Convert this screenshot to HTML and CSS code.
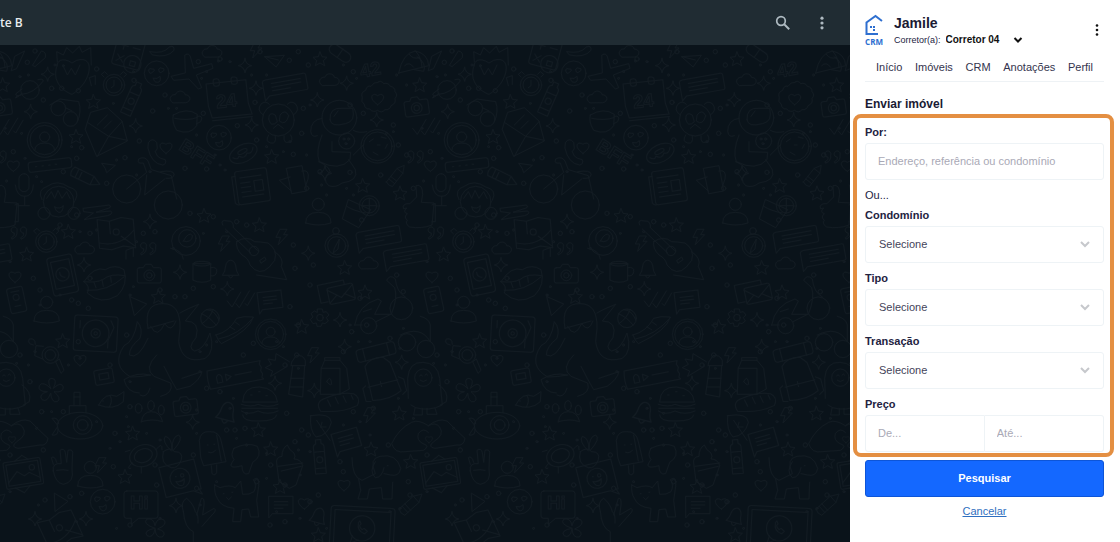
FILE: index.html
```html
<!DOCTYPE html>
<html lang="pt-BR">
<head>
<meta charset="utf-8">
<meta name="viewport" content="width=device-width, initial-scale=1">
<title>CRM</title>
<link rel="stylesheet" href="styles.css">
</head>
<body>
<div class="app">
  <main class="chat">
    <header class="chat-header">
      <span class="chat-title">te B</span>
      <div class="chat-actions">
        <button class="icon-button" type="button" aria-label="Buscar">
          <svg width="18" height="18" viewBox="0 0 18 18" fill="none" stroke="currentColor"><circle cx="7" cy="7" r="4.3" stroke-width="1.7"/><path d="M10.2 10.2L15.2 15.2" stroke-width="2"/></svg>
        </button>
        <button class="icon-button" type="button" aria-label="Menu">
          <svg width="18" height="18" viewBox="0 0 18 18" fill="currentColor"><circle cx="9" cy="4.2" r="1.6"/><circle cx="9" cy="9" r="1.6"/><circle cx="9" cy="13.8" r="1.6"/></svg>
        </button>
      </div>
    </header>
    <div class="chat-body">
      <svg class="wallpaper" width="100%" height="100%" aria-hidden="true">
        <defs>
          <marker id="ring" markerWidth="18" markerHeight="18" refX="9" refY="9" markerUnits="userSpaceOnUse"><circle cx="9" cy="9" r="6.5" class="ink"/></marker>
          <marker id="dot" markerWidth="10" markerHeight="10" refX="5" refY="5" markerUnits="userSpaceOnUse"><circle cx="5" cy="5" r="3" class="ink"/></marker>
          <path id="star" d="M0-21L6-7L21-5L10 5L14 20L0 12L-14 20L-10 5L-21-5L-6-7Z"/>
          <path id="spark" d="M0-21Q2-3 20 0Q3 3 0 21Q-3 3-20 0Q-3-3 0-21Z"/>
          <path id="heart" d="M0 17C-30-2-17-22 0-10C17-22 30-2 0 17Z"/>
          <path id="cloud" d="M-22 16C-38 6-26-10-14-8C-8-24 14-20 15-8C34-8 34 14 18 16Z"/>
          <g id="smile"><circle r="37"/><path d="M-24-10q2-8 10-3q8-2 7 5q-9 9-13 8q-4-4-4-10M6-12q4-8 10-3q8-1 6 6q-8 8-12 7q-4-4-4-10M-10 15q12 4 20-6q4 18-8 18q-10 0-12-12"/></g>
          <g id="avatar"><circle r="52"/><circle r="44"/><circle cy="-9" r="15"/><path d="M-30 31q2-22 30-22t30 22"/></g>
          <g id="bubble"><path d="M-60-24H56q6 0 6 6V20q0 6-6 6H-56l-14 12V-18q2-6 10-6Z"/><path d="M-44-10H44M-44 1H44M-44 12H10"/></g>
          <g id="camera"><path d="M-30-22h12l6-10h18l6 10h18q6 0 6 6v34q0 6-6 6h-60q-6 0-6-6v-34q0-6 6-6Z"/><circle r="16" cy="1"/><circle r="8" cy="1"/></g>
          <g id="phone"><rect x="-38" y="-58" width="76" height="116" rx="10"/><rect x="-28" y="-44" width="56" height="82"/><circle r="20" cy="-2"/><path d="M-7-10q-2 14 12 18"/></g>
          <g id="person"><circle cy="-28" r="18"/><path d="M-38 28q0-32 38-32t38 32Q0 40-38 28Z"/></g>
          <g id="bell"><path d="M-24 18q8-10 9-28q4-16 15-16t15 16q1 18 9 28ZM-7 20q7 14 14 0"/></g>
          <g id="pencil"><path d="M-44-14H20L46 0L20 14H-44Q-52 0-44-14ZM-30-14V14M20-14V14M-18-14V14"/></g>
          <g id="map"><path d="M-54-46l36 8 36-8 36 8V48l-36-8-36 8-36-8ZM-54 24q60 20 108-30M14 10l40 34M-18-38V0"/><circle r="9" cy="-4"/></g>
          <g id="mug"><path d="M-28-24H24V26Q-2 38-28 26ZM24-12q20-4 18 12t-18 12"/><ellipse cy="-24" cx="-2" rx="26" ry="7"/></g>
          <g id="note"><path d="M-36-26H36V26H-26l-10 12Z"/><path d="M-20-10H20M-20 0H20M-20 10H6"/></g>
          <g id="timer"><circle r="32"/><circle r="24"/><path d="M0-14V2L-8 8M-30-24l-8-8 10-8 8 8M30-24l8-8-10-8-8 8"/></g>
          <g id="bottle"><path d="M-16-34q0-8 8-10v-12H8v12q8 2 8 10V46h-32ZM-16-20H16M-16 30H16"/><circle cy="4" r="9"/></g>
          <path id="bolt" d="M-4-22H16L6-6H18L-10 24L-4 2H-16Z"/>
          <path id="ticks" d="M-40 0l14 18 26-44M-14 8l10 12 30-50M14 8l6 6 22-38"/>
          <g id="quote"><path d="M-20 10q12-6 8-14a9 9 0 1 1 8-6q2 18-14 24ZM8 10q12-6 8-14a9 9 0 1 1 8-6q2 18-14 24Z"/></g>
          <g id="doodles">
            <polyline class="marks rings" points="105,18 82,52 290,72 155,130 130,165 235,137 185,130 402,106 595,50 660,42 610,205 495,150 458,198 418,288 555,370 375,338 40,320 230,340 245,308 190,380 320,415 620,372 712,242 765,172 868,46 780,20 895,20 770,285 880,328 905,265 910,190 925,60 1060,80 1050,180 1090,205 1195,300 1180,240 1050,382 1142,390 920,430 1085,525 960,380 1240,430 1220,330 570,505 640,515 710,530 430,565 465,560 270,565 230,510 180,540 100,700 120,735 270,700 215,765 265,790 235,775 480,735 525,755 555,755 580,730 640,725 740,540 880,600 885,670 870,785 895,840 890,930 855,960 730,930 760,895 380,870 60,930 235,890 330,960 90,1010 125,1100 190,1100 345,1165 390,1085 620,1030 660,1040 680,1155 705,1155 735,1150 860,1105 885,1190 905,1155 812,1260 855,1320 770,1310 580,1230 465,1260 470,1320 340,1265 245,1345 210,1355 135,1365 130,1215 30,1230 390,1440 590,1330 810,1440 855,1430 930,1370 955,1350 1020,1250 1030,1280 1225,1310 1230,1350 1165,1200 1120,1090 1060,1100 1055,860 1100,840 1170,880 1030,920 930,720 940,660 1210,740 1190,690 1080,760 925,1170"/>
            <polyline class="marks dots" points="60,95 85,90 165,60 190,62 340,175 400,80 620,80 655,48 690,50 755,90 800,90 605,100 505,190 530,190 590,270 645,330 660,360 675,375 800,305 850,320 930,180 1030,60 1190,90 1220,120 1070,100 920,330 870,290 410,390 350,345 450,380 215,305 65,265 75,340 20,408 110,395 125,410 15,250 1180,260 1160,265 1040,430 980,450 965,420 1060,450 680,560 610,565 520,610 410,590 290,555 175,550 240,560 30,650 120,780 180,750 400,725 390,750 650,890 600,920 620,900 850,905 830,890 895,970 1050,840 1075,890 1110,890 1210,850 1200,910 85,960 105,920 50,955 205,960 240,940 390,1010 600,980 690,1090 700,1060 740,1105 590,1095 380,1115 385,1145 290,1130 155,1100 110,1150 330,1210 360,1190 440,1165 480,1185 590,1165 710,1180 740,1200 800,1225 895,1215 930,1220 900,1290 800,1300 650,1310 600,1380 480,1420 350,1450 230,1430 115,1380 30,1340 830,1400 900,1420 980,1450 1200,1390 1170,1400 1030,1140 1080,1130 1110,1170 1240,1120 1195,1060"/>
            <g class="ink">
              <path d="M172 50L170 20L190 30L200 8L218 24L238 4L246 22L272 8L274 60M172 60c-20 50 20 80 44 88c60-36 72-120 14-102l-14 8c-30-20-46-4-44 6"/><path d="M190 64l12 26 12-20 12 20 14-30"/>
              <g transform="translate(385 25) rotate(15)"><rect x="-42" y="-46" width="84" height="88" rx="8"/><path d="M-30-20h24M-18-32v24M10-20h22M-30 10l20 20M-10 10l-20 20"/><circle cx="20" cy="28" r="26"/><rect x="12" y="20" width="16" height="14"/></g>
              <use href="#smile" x="470" y="85"/><use href="#smile" x="657" y="278"/><use href="#smile" x="308" y="1370"/>
              <path d="M555 30q14-10 18 12l8 28 54-14 4 14-50 20 16 38-10 4-28-30-46 4-8-12 42-10Z"/>
              <path d="M450 20q40 8 58-14 16-6 14 10-20 24-64 14Z"/>
              <g transform="translate(685 160) rotate(-6)"><path d="M-62-50H58V20L66 54H-54L-62 16ZM-54 62H66"/><rect x="-40" y="-62" width="18" height="22" rx="7"/><rect x="14" y="-62" width="18" height="22" rx="7"/><text class="doodle-text" x="-38" y="26">24</text></g>
              <circle cx="90" cy="135" r="28"/><path d="M66 146q-30 22-16 8M64 150q-20 6-16-4l18-14M66 148Q100 146 130 108q0-8-16-4"/>
              <use href="#timer" x="342" y="120"/><use href="#timer" x="139" y="590"/>
              <use href="#bottle" transform="translate(395 165) rotate(24)"/><use href="#bottle" transform="translate(959 1240) rotate(-5)"/>
              <circle cx="175" cy="190" r="22"/><circle cx="212" cy="222" r="22"/><path d="M150 180l30-18 56 8q10 30-4 60M196 188l20 10"/>
              <circle cx="-30" cy="892" r="26"/><circle cx="27" cy="912" r="26"/><path d="M-50 870q60-30 90 20V840q-4-20-30-26"/>
              <path d="M262 232l10-30 50-14 44 40 16 60-92 46-34-80Zm0 0l64 42 40-44M292 334l34-60 56 12M292 240l30-30M312 250l22-22"/>
              <use href="#avatar" x="134" y="285"/><use href="#avatar" transform="translate(812 868) scale(.88)"/>
              <g transform="translate(150 360) rotate(-7)"><rect x="-65" y="-15" width="130" height="30" rx="8"/><path d="M-44 0h4M-24 0h4M-4 0h4M16 0h4"/></g>
              <use href="#pencil" transform="translate(258 398) rotate(26)"/><use href="#pencil" transform="translate(1190 390) rotate(-52) scale(.8)"/><use href="#pencil" transform="translate(1235 1375) rotate(-42) scale(.9)"/>
              <rect x="57" y="386" width="30" height="54" rx="15"/><path d="M46 420q4 34 28 34t26-34M74 454v26M54 482h34"/>
              <circle cx="176" cy="470" r="46"/><circle cx="132" cy="505" r="18"/><circle cx="222" cy="505" r="18"/><path d="M126 464q-16-30 16-40 30-22 64 2 36 8 20 40M140 460l14-20 10 20 10-24 12 24 14-20 10 20M164 486q16 8 26-4-2 22-14 20-10-4-12-16"/>
              <circle cx="380" cy="432" r="42"/><circle cx="505" cy="480" r="42"/><path d="M380 432l60-50-10-28q-20 4-14-12 18-10 28 6l10 26 60 18 16 70M440 390l-6 60 60-48M482 380q40-6 40 8t-24 12"/>
              <path d="M446 292q10-16 24 0l2 18-6 10q4 16 16 20l14 4q4 14-8 16-34-4-44-50Z"/>
              <path d="M520 210q40-24 72-2l-2 34q-20 30-60 14Q514 230 520 210ZM592 214q20-4 10 16l-12 6M524 220q40 8 66-2"/>
              <g transform="translate(730 325) rotate(-26)"><ellipse rx="44" ry="26"/><ellipse cy="-6" rx="15" ry="6"/><path d="M-34-2q10 14 18 4 14 16 26 2 14 10 24-8"/></g>
              <text class="doodle-text" transform="translate(534 312) rotate(32)">BFF</text>
              <g transform="translate(755 420) rotate(-8)"><rect x="-46" y="-46" width="96" height="100" rx="7"/><path d="M-46-32h-10v78q2 8 12 8M-32-26h64M-32-10h28M-32 4h28M-32 18h28M-32 32h64"/><rect x="8" y="-12" width="26" height="32"/></g>
              <circle cx="835" cy="225" r="48"/><path d="M790 210q-22-14-6-34 14-10 24 2M880 210q22-14 6-34-14-10-24 2M806 222q0-24 20-12l6 20q-20 20-26-8M866 212q-10-22-26-2l-2 18q20 16 28-16M820 250l14-12 16 12M806 270q-12 20 6 24t14-20M852 274q-2 22 14 18t6-22"/>
              <use href="#bubble" transform="translate(859 118) rotate(-10)"/><use href="#bubble" transform="translate(1140 575) rotate(-10)"/><use href="#bubble" transform="translate(1222 630) rotate(-10)"/>
              <path d="M860 370l46-8 14 76-44 8ZM870 396l-32 10 36 32M906 378q24-6 18 24l-8 24"/>
              <path d="M795 35l58-4-24 34ZM795 35l40 10M0 35q30 20 20 44l-28-5M34 76l10-42 30-16-24 52ZM98 60l26-42q16 2 12 20l-30 26Z"/>
              <g transform="translate(1020 25) rotate(35)"><rect x="-36" y="-15" width="72" height="30" rx="15"/><path d="M0-15v30"/></g>
              <text class="doodle-text" transform="translate(1084 98) rotate(-10)">42</text>
              <path d="M1196 84q12-60 50-66 38 8 40 44l-90 22ZM1214 62q14-14 26 4M1246 18q20 20 20 50M1228 28q10 16 30 10"/>
              <path d="M1133 112q10-8 18 4 14-4 20 8 14 2 14 16 10 10 0 20 4 16-12 22-4 14-18 12-10 12-22 2-14 8-24-4-16 0-16-14-12-8-6-20-6-16 10-22 4-16 16-12 8-14 20-12Z"/><use href="#heart" x="1133" y="162"/>
              <use href="#camera" transform="translate(1250 188) rotate(-8)"/><use href="#camera" x="448" y="690"/><use href="#camera" transform="translate(557 1087) rotate(-7)"/>
              <circle cx="1018" cy="218" r="52"/><path d="M990 224q-2-38 36-34h32q10 40-22 46-44 12-46-12M1002 214l12-16M966 270q-20 50-8 80 60 30 92-6l2-22-56-2v-30M966 220q-34 4-34 40 4 20 20 12M956 350q30 12 34 30-26 22-4 42 20 8 40-8 50-6 40-40-12-20-20-30M1060 256q16 10 40 4M1060 330l30-30"/><circle cx="1040" cy="288" r="24"/><circle cx="1032" cy="282" r="3"/><circle cx="1046" cy="282" r="3"/><circle cx="1038" cy="296" r="3"/>
              <circle cx="1133" cy="304" r="50"/><circle cx="1133" cy="304" r="43"/><path d="M1108 290l12-8M1144 276l14 4M1120 322l14 8M1156 310l6-12M1132 300h8"/>
              <use href="#ticks" x="1278" y="250"/><use href="#ticks" x="722" y="768"/>
              <path d="M1210 490q-4-16 20-14l20-20-2-34q20-6 20 26l-4 24 38 2-6 66q-30 12-68 6-14-12-6-20-12-10 0-20-16-6-2-16ZM1296 480l10-4v54h-10"/>
              <path d="M1046 464l66 30-36 54-48-26ZM1040 484q22 14 56 20"/><circle cx="1108" cy="482" r="30"/><circle cx="1108" cy="482" r="22"/><path d="M1108 460v44M1086 482h44"/>
              <use href="#person" x="955" y="506"/><use href="#person" x="140" y="800"/><use href="#person" x="271" y="1295"/>
              <circle cx="1010" cy="602" r="35"/><circle cx="1010" cy="602" r="27"/><circle cx="1008" cy="558" r="10"/><path d="M1004 608l14-26-4 30-14 12Z"/>
              <use href="#map" transform="translate(349 565) rotate(-5)"/><use href="#map" transform="translate(180 1452) rotate(-25)"/>
              <use href="#phone" transform="translate(188 690) rotate(-12)"/>
              <path d="M252 710q30-48 64-36 28-18 56 0 14 44-20 78-50 30-90-8 10-20-10-34ZM252 710q36 4 56-6 24-20 66-12M262 736q60 4 110-40M282 712l6 16M306 704l4 20M332 696l2 16"/>
              <circle cx="558" cy="588" r="43"/><circle cx="562" cy="580" r="26"/><path d="M550 588q16-30 28-16-4 24-28 16M512 610q34 4 38 32"/>
              <path d="M668 540q-8-18 14-12 20-2 18 20l72 68M676 552l76 72M710 590q30-20 54 0 14 0 40 4 30 20 20 52l-16 20q-30 30-58-6-4-20-24-30-20-20-16-40ZM780 646l14-10 4 8-14 10ZM824 620q30 20 20 44l16 40-90-14"/><circle cx="762" cy="618" r="14"/>
              <use href="#mug" x="608" y="680"/><use href="#bell" x="692" y="672"/><use href="#bell" transform="translate(680 1103) rotate(15) scale(1.2)"/><use href="#bell" transform="translate(955 1415) rotate(15)"/>
              <g transform="translate(287 865) rotate(3)"><rect x="-65" y="-52" width="130" height="106" rx="8"/><circle r="40"/><circle r="14"/><circle r="5"/><path d="M44-40l10 20-16 40v22M-48-36v22"/></g>
              <path d="M444 850q-14-76 46-74 52 0 50 74l-4 40q10 70 80 50 30-20 14-76-18 50-46 54-24-8 4-40 14-50-32-50l40-50q-40 16-56 26M444 850l78-22M452 844q20 40 42-8 20 30 34-8M444 880q-30 66-56 50 0-24 32-50 10-30-8-50-10 60-40 72-40 60 20 94 30 0 60-6M470 930q-40 40-8 64l50 20q10 30-30 40M492 964q20 40 38 70l40-10q30-20 36-44l-60 20M450 990q-40-10-78 14 10 40 46 40M420 1050q20 12 30-20"/>
              <circle cx="630" cy="820" r="28"/><path d="M604 806q26 10 44 34M640 794q-14 30-34 42M620 794q24 0 36 30"/>
              <path d="M648 870q40-10 62-50 20-8 50-4-10 40-96 80-10-8-16-26ZM656 882q60-12 104-64M690 846l14 8M704 830l14 10"/>
              <use href="#note" transform="translate(810 765) rotate(-7)"/><use href="#note" transform="translate(1039 1185) rotate(-16) scale(1.1)"/><use href="#note" x="843" y="1380"/>
              <circle cx="151" cy="930" r="25"/><circle cx="151" cy="930" r="16"/><path d="M168 950l10-8 14 34-8 8ZM128 942l-24-10 4-30 22 2M100 900q-20-4-12-18 18-4 18 16"/>
              <g transform="translate(50 765) rotate(-12)"><rect x="-24" y="-38" width="48" height="76" rx="7"/><circle cy="-8" r="9"/><path d="M-9 18H9M-12-26h24"/></g>
              <g transform="translate(705 990) rotate(-11)"><path d="M-80-28H82l-4 10 4 10-4 10 4 10-4 10 4 6H-80q-6-26 0-56Z"/><path d="M-56-4q8-14 16 0v18h-16ZM-28-8l16 10-16 10ZM0 0h50"/></g>
              <path d="M728 1070q2-46 50-44 50 4 54 44ZM724 1078q30 10 50 0 30 12 60 0M726 1090h106M724 1098q20 14 50 0 30 14 60 0M728 1110q0 20 50 18 50 0 52-18M752 1050h4M776 1040h4M798 1052h4"/>
              <path d="M152 1030q-14-30 4-30 18 2 4 30 24-22 30-4 0 18-28 14 24 20 10 30-18 4-20-26-10 30-26 20-12-16 16-24-30 0-24-18 10-16 34 8Z"/>
              <ellipse cx="240" cy="1142" rx="68" ry="40"/><circle cx="248" cy="1140" r="28"/><circle cx="248" cy="1140" r="16"/><path d="M208 1106v-24h50v20M222 1082v-40h18v40M222 1056h18M172 1140l-16-20q20-4 20 16M172 1146l-16 24q20 4 18-18"/>
              <path d="M296 1080q20-40 54-26l22-14-2 30q-30 28-74 10ZM330 1052q10 14-2 34M308 1068h2"/>
              <path d="M424 1130q4-30 30-30t34 30q-30-10-64 0Z"/><ellipse cx="416" cy="1090" rx="10" ry="14"/><ellipse cx="453" cy="1082" rx="10" ry="15"/><ellipse cx="484" cy="1095" rx="9" ry="14"/>
              <g transform="translate(312 995) rotate(-10)"><rect x="-28" y="-22" width="56" height="44" rx="5"/><rect x="-14" y="-10" width="28" height="18"/></g>
              <path d="M602 1236l-4-50q4-28 30-26 30-2 36 30l14 60-66 12ZM650 1170l14 78M634 1262l2 24q10 8 14-4v-22M622 1200h2M642 1198h2M626 1222q14 4 20-6"/>
              <path d="M490 1220q20-16 34 0 26 0 20 24-10 28-30 24-34-10-24-48ZM514 1218q-30-30-18-44 20 4 20 40 0-40 20-44 16 10-16 46"/>
              <ellipse cx="430" cy="1232" rx="42" ry="32" transform="rotate(-20 430 1232)"/><ellipse cx="430" cy="1232" rx="28" ry="20" transform="rotate(-20 430 1232)"/><path d="M468 1214q20-26 18 0M396 1254q-20 20-4 16M390 1216l-14 4M424 1266v18"/>
              <path d="M702 1210q40-20 70-6 16 30-14 48l-12 34q-20 6-20-24-50 14-24-18-12-14 0-34Z"/>
              <g transform="translate(70 1285) rotate(-9)"><rect x="-56" y="-40" width="112" height="80" rx="5"/><rect x="-48" y="-32" width="96" height="64"/><path d="M-48 22l30-30 20 16 16-8 30 20M-20-40l24-14 16 14M-30 40l24 18 20-18"/><circle cx="28" cy="-14" r="8"/></g>
              <path d="M160 1278q-4-26 24-22l-4-40q12-8 16 6l4 30 4-36q12-4 14 6l-2 50q8 40-26 46-24-4-30-40ZM160 1258l-6-20q10-8 16 14M170 1276q20-4 34 0"/>
              <g transform="translate(540 1300) rotate(-14)"><path d="M-54-46H54V46H48l6 16-24-16H-54Z"/><circle r="30"/><path d="M-12-8h2M8-12a5 5 0 1 0 1 0M-14 6q14 8 26-2-4 22-14 18-8-2-12-16"/></g>
              <path d="M380 1338h86q8 0 8 8v66q0 8-8 8h-50l-22 18v-18h-14q-8 0-8-8v-66q0-8 8-8Z"/><text class="doodle-text" x="390" y="1392">Hi</text>
              <path d="M644 1320l16 8q30-10 46 0l16-20 6 40q20 2 34-8 10-20-2-36 20-14 16 20l-6 42 6 50h-24l-6-24-20 2-4 36h-24l4-40q-40-4-50-30-10-16-8-40ZM670 1346h2M696 1342h2M680 1358l6 6 8-8"/>
              <path d="M465 1450q-40-14-24-28 20-4 24 20 6-26 26-18 14 14-18 28 30 8 14 24-20 4-22-24-6 30-24 20-12-16 24-22"/>
              <path d="M550 1400q-10-30 10-40 20 16 26 40 10 8 8 34M590 1410l14-50q10-2 8 20l-4 30 34-20q10 6-6 20l-30 34M550 1400q4 50 30 60v40"/>
              <path d="M964 970l10-24h46l20 24 8 62-30 16h-56ZM964 970h56v78M974 946v-8h46v8M980 1010q10-20 14 0t-14 0"/>
              <g transform="translate(1139 985) rotate(-14)"><path d="M-38-30q20-24 60-14l16 20 12 90q-40 20-90 8ZM-50 26l-10 6v40l14 4M52 24l14 10v36l-14 8M-44 32h92M-4 24v16"/><rect x="-54" y="-84" width="118" height="38" rx="10"/><path d="M-32-84v38M42-84v38"/></g>
              <g transform="translate(1014 1070) rotate(-9)"><path d="M-56 20q-14-30 20-36 50-12 86 0 20 14 6 36-50 16-112 0M-30-10l6 20M-6-14l6 20M18-14l6 20M42-14l4 14"/></g>
              <g transform="translate(1011 750) rotate(-12)"><rect x="-26" y="-26" width="78" height="50" rx="6"/><path d="M-26-20l38 30 38-30M-26 20l26-20M52 20L22 0M-30 14h-22v-54h80v12"/></g>
              <path d="M953 792h14l2 10 10-2 8 10-8 8 6 10-10 8-8-2-4 10h-12l-2-10-10 2-8-12 8-8-6-10 10-8 8 4Z"/><circle cx="960" cy="818" r="10"/>
              <circle cx="1106" cy="842" r="24"/><circle cx="1204" cy="790" r="34"/><path d="M1064 840q10-60 70-78l10 6-20 40h50q20-50 10-80l-24-22q10-20 26-4 4 40 30 54M1064 840h22M1128 830l44-22M1090 800l24-8"/>
              <path d="M876 950l12-18q20-4 28 14v16h-42ZM878 962l-12 86 42 8 6-94M872 1000h40M870 1026h40M868 950l-40-24-2 20-22-4 10 16-18 10 22 10-6 16 50-30"/>
              <path d="M830 1256q-4-20 16-22 0-24 16-34 4 14 20 24 6 10 0 18 20 0 26 20l-20 58-20 10-30-20ZM834 1264l74-10M844 1278l60-14"/>
              <path d="M932 1112q60-10 62 20-10 40-46 44-20-20-16-64ZM950 1126l40 60M962 1146h16M962 1146l4-14"/>
              <path d="M1056 1238q0 60 30 68l40-20q-20-46 14-52 50-10 62 36-4 26-30 20l-20-4M1076 1302l6 34-8 26h28l6-30 36-4 4 34h28l2-50M1126 1250q-20 30 0 48 20 0 26-30M1162 1262h2"/>
              <g transform="translate(1087 1440) rotate(3)"><rect x="-96" y="-54" width="192" height="130" rx="10"/><rect x="-84" y="-42" width="168" height="118"/><circle cy="10" r="38"/><path d="M-28 34l-6 22 24-10M-12-6q-4 24 20 32l8-8-10-8-6 4q-8-6-8-12l4-6-4-8Z"/></g>
              <path d="M-26 1060l-2-60q4-50 46-48 44 2 50 48l8 80q-40 20-80 8l-14-8M66 1020q30 20 22 50l-18 10M-6 1090l-4 20h26v-20M30 1090v18h30l-6-18"/><circle cx="19" cy="998" r="26"/><path d="M8 992q4-6 8 0M24 990q4-6 8 0M10 1006q8 8 18 0"/>
              <path d="M34 1142q-30-20-50-10-40 20-60 64 10 30 40 24l56-4q20-14-2-20-20-10-14-30 14-20 30-4M34 1142q30-24 56-14 30 30 54 52-4 24-24 20-40 6-66 10-24-4-4-20 34-20 18-44-12-16-34-4"/><use href="#heart" transform="translate(36 1183) scale(.6)"/>
              <use href="#cloud" x="540" y="157"/><use href="#cloud" x="636" y="20"/><use href="#cloud" x="988" y="105"/><use href="#cloud" x="254" y="610"/><use href="#cloud" x="1105" y="655"/>
              <use href="#star" x="280" y="170"/><use href="#star" x="228" y="275"/><use href="#star" x="815" y="335"/><use href="#star" x="960" y="42"/><use href="#star" x="8" y="120"/><use href="#star" x="1088" y="422"/><use href="#star" x="1200" y="445"/><use href="#star" x="778" y="540"/><use href="#star" x="612" y="512"/><use href="#star" x="205" y="560"/><use href="#star" x="80" y="628"/><use href="#star" x="475" y="755"/><use href="#star" x="188" y="888"/><use href="#star" x="1034" y="668"/><use href="#star" x="1095" y="742"/><use href="#star" x="905" y="845"/><use href="#star" x="398" y="1165"/><use href="#star" x="375" y="1295"/><use href="#star" x="775" y="1155"/><use href="#star" x="812" y="1212"/><use href="#star" x="840" y="1325"/><use href="#star" x="1113" y="1213"/><use href="#star" x="1198" y="1105"/><use href="#star" x="1232" y="1250"/><use href="#star" x="955" y="1470"/>
              <use href="#spark" x="143" y="88"/><use href="#spark" x="92" y="200"/><use href="#spark" x="407" y="243"/><use href="#spark" x="735" y="62"/><use href="#spark" x="768" y="130"/><use href="#spark" x="755" y="240"/><use href="#spark" x="952" y="165"/><use href="#spark" x="1040" y="115"/><use href="#spark" x="1130" y="225"/><use href="#spark" x="975" y="385"/><use href="#spark" x="925" y="625"/><use href="#spark" x="450" y="530"/><use href="#spark" x="252" y="660"/><use href="#spark" x="540" y="682"/><use href="#spark" x="682" y="732"/><use href="#spark" x="1020" y="825"/><use href="#spark" x="1034" y="905"/><use href="#spark" x="1205" y="952"/><use href="#spark" x="825" y="1015"/><use href="#spark" x="943" y="1037"/><use href="#spark" x="578" y="1132"/><use href="#spark" x="528" y="1382"/><use href="#spark" x="105" y="1422"/><use href="#spark" x="258" y="1422"/>
              <use href="#heart" x="40" y="362"/><use href="#heart" x="498" y="308"/><use href="#heart" x="45" y="695"/><use href="#heart" x="240" y="945"/><use href="#heart" x="1032" y="1320"/><use href="#heart" x="913" y="1375"/>
              <use href="#bolt" x="768" y="15"/><use href="#bolt" x="845" y="575"/><use href="#bolt" x="672" y="595"/><use href="#bolt" x="940" y="930"/><use href="#bolt" x="1108" y="1110"/><use href="#bolt" x="302" y="1260"/>
              <use href="#quote" x="1245" y="340"/><use href="#quote" x="55" y="568"/><use href="#quote" x="443" y="615"/>
              <path d="M306 355l40 6-26 22-4-12ZM390 755l50 22-36 34ZM164 1345l40 24-38 30ZM250 490l78-10q10 8-10 12l-30 10 44-4q10 8-10 14l-70 12 28-20-28-4ZM274 122l-6-24 18-6v26M378 642v-26l22-8v26"/>
            </g>
          </g>
          <pattern id="wallpaper" width="417" height="510" patternUnits="userSpaceOnUse" viewBox="0 0 1251 1530">
            <use href="#doodles"/><use href="#doodles" x="-1251"/><use href="#doodles" x="1251"/>
          </pattern>
        </defs>
        <rect width="100%" height="100%" fill="url(#wallpaper)"/>
      </svg>
    </div>
  </main>

  <aside class="panel">
    <header class="panel-header">
      <svg class="logo" width="18" height="32" viewBox="0 0 18 32" role="img" aria-label="CRM">
        <path d="M17 7L10.5 2L1.500 8.500V20H13" fill="none" stroke="#2e6fd0" stroke-width="2"/>
        <path d="M5 12h2v2H5zM8 12h2v2H8zM8 15h2v2H8z" fill="#2e6fd0"/>
        <text class="logo-text" x="9" y="31" text-anchor="middle">CRM</text>
      </svg>
      <div class="identity">
        <h1 class="name">Jamile</h1>
        <div class="broker">
          <label for="broker">Corretor(a):</label>
          <div class="broker-picker">
            <select id="broker" class="broker-select"><option>Corretor 04</option></select>
            <svg class="broker-arrow" width="10" height="8" viewBox="0 0 10 8" fill="none" stroke="#111" stroke-width="2"><path d="M1.500 2L5 5.500L8.500 2"/></svg>
          </div>
        </div>
      </div>
      <button class="icon-button more" type="button" aria-label="Mais opções">
        <svg width="6" height="14" viewBox="0 0 6 14" fill="currentColor"><circle cx="3" cy="2.500" r="1.300"/><circle cx="3" cy="7" r="1.300"/><circle cx="3" cy="11.500" r="1.300"/></svg>
      </button>
    </header>

    <nav class="tabs">
      <a href="#inicio">Início</a>
      <a href="#imoveis">Imóveis</a>
      <a href="#crm">CRM</a>
      <a href="#anotacoes">Anotações</a>
      <a href="#perfil">Perfil</a>
    </nav>

    <h2 class="section-title">Enviar imóvel</h2>
    <form class="search">
      <div class="filters">
        <div class="field">
          <label for="por">Por:</label>
          <input id="por" class="control" type="text" placeholder="Endereço, referência ou condomínio">
        </div>
        <p class="or">Ou...</p>
        <div class="field">
          <label for="condominio">Condomínio</label>
          <div class="picker">
            <select id="condominio" class="control"><option>Selecione</option></select>
            <svg class="arrow" width="10" height="8" viewBox="0 0 10 8"><path d="M1 2L5 6L9 2"/></svg>
          </div>
        </div>
        <div class="field">
          <label for="tipo">Tipo</label>
          <div class="picker">
            <select id="tipo" class="control"><option>Selecione</option></select>
            <svg class="arrow" width="10" height="8" viewBox="0 0 10 8"><path d="M1 2L5 6L9 2"/></svg>
          </div>
        </div>
        <div class="field">
          <label for="transacao">Transação</label>
          <div class="picker">
            <select id="transacao" class="control"><option>Selecione</option></select>
            <svg class="arrow" width="10" height="8" viewBox="0 0 10 8"><path d="M1 2L5 6L9 2"/></svg>
          </div>
        </div>
        <div class="field">
          <label for="preco-de">Preço</label>
          <div class="range">
            <input id="preco-de" class="control" type="text" placeholder="De...">
            <input class="control" type="text" placeholder="Até..." aria-label="Preço até">
          </div>
        </div>
      </div>
      <button class="submit" type="submit">Pesquisar</button>
      <a class="cancel" href="#cancelar">Cancelar</a>
    </form>
  </aside>
</div>
</body>
</html>
```
FILE: styles.css
```css
* { box-sizing: border-box; }

body {
  margin: 0;
  font-family: "Liberation Sans", Arial, sans-serif;
  font-size: 11px;
  line-height: 16px;
  color: #23233f;
}

h1, h2, p { margin: 0; }

input, select, button {
  font: inherit;
  color: inherit;
  margin: 0;
}

.app {
  display: grid;
  grid-template-columns: minmax(0, 1fr) 270px;
  min-height: 100vh;
}

.chat {
  display: flex;
  flex-direction: column;
  background: #0a131a;
}

.chat-header {
  display: flex;
  align-items: center;
  justify-content: space-between;
  height: 45px;
  padding-right: 19px;
  background: #202c33;
  color: #e9edef;
}

.chat-title {
  font-family: "Open Sans", "Noto Sans", sans-serif;
  font-size: 12px;
  font-weight: 600;
}

.chat-actions {
  display: flex;
  gap: 21px;
  color: #aebac1;
}

.icon-button {
  display: flex;
  padding: 0;
  border: 0;
  background: none;
}

.chat-body {
  flex: 1;
  display: grid;
}

.wallpaper { display: block; }

.ink {
  fill: none;
  stroke: #121b22;
  stroke-width: 3;
  stroke-linejoin: round;
  stroke-linecap: round;
}

.marks {
  fill: none;
  stroke: none;
}

.rings {
  marker-start: url(#ring);
  marker-mid: url(#ring);
  marker-end: url(#ring);
}

.dots {
  marker-start: url(#dot);
  marker-mid: url(#dot);
  marker-end: url(#dot);
}

.doodle-text {
  font-family: "Liberation Sans", Arial, sans-serif;
  font-size: 56px;
  font-weight: 700;
}

.panel {
  padding: 14px 16px 20px 15px;
  background: #fff;
}

.panel-header {
  display: flex;
  align-items: flex-start;
}

.logo { flex: none; }

.logo-text {
  font-family: "Open Sans", "Noto Sans", sans-serif;
  font-size: 8px;
  font-weight: 700;
  fill: #2e6fd0;
}

.identity {
  flex: 1;
  margin-left: 11px;
}

.name {
  font-size: 14px;
  line-height: 18px;
  color: #1a1a33;
}

.broker {
  display: flex;
  gap: 5px;
  font-size: 9px;
}

.broker-picker { position: relative; }

.broker-select {
  appearance: none;
  display: block;
  width: 78px;
  padding: 0;
  border: 0;
  background: none;
  font-size: 10px;
  font-weight: 700;
  line-height: 16px;
  color: #111;
}

.broker-arrow {
  position: absolute;
  right: 1px;
  top: 4px;
  pointer-events: none;
}

.more {
  margin: 9px 4px 0 0;
  color: #111;
}

.tabs {
  display: flex;
  justify-content: space-between;
  padding: 11px 11px 6px;
  border-bottom: 1px solid #eef2f5;
}

.tabs a {
  color: #33334d;
  text-decoration: none;
}

.section-title {
  margin-top: 14px;
  font-size: 12px;
  line-height: 16px;
  color: #1a1a33;
}

.search {
  display: flex;
  flex-direction: column;
}

.filters {
  display: flex;
  flex-direction: column;
  gap: 7px;
  margin: 2px -10px 3px -12px;
  padding: 6px 6px 1px 8px;
  border: 4px solid #e48f42;
  border-radius: 8px;
}

.field {
  display: flex;
  flex-direction: column;
  gap: 3px;
}

.field label {
  font-weight: 700;
  color: #23233f;
}

.or { margin-bottom: -3px; }

.control {
  appearance: none;
  display: block;
  width: 100%;
  min-width: 0;
  height: 37px;
  padding: 0 12px 2px;
  border: 1px solid #eef3f6;
  border-radius: 3px;
  background: #fff;
}

.control::placeholder {
  color: #a9a9b6;
  opacity: 1;
}

select.control {
  padding: 0 13px 2px;
  color: #44445a;
}

.picker { position: relative; }

.arrow {
  position: absolute;
  right: 14px;
  top: 14px;
  fill: none;
  stroke: #c6c8cc;
  stroke-width: 2;
  pointer-events: none;
}

.range { display: flex; }

.range .control:first-child { border-radius: 3px 0 0 3px; }

.range .control + .control {
  border-left: 0;
  border-radius: 0 3px 3px 0;
}

.submit {
  height: 37px;
  padding: 0 0 2px;
  border: 1px solid #0d55d8;
  border-radius: 3px;
  background: #1468ff;
  color: #fff;
  font-weight: 700;
}

.cancel {
  align-self: center;
  margin-top: 6px;
  color: #2f6fc0;
  text-decoration: underline;
}
```
